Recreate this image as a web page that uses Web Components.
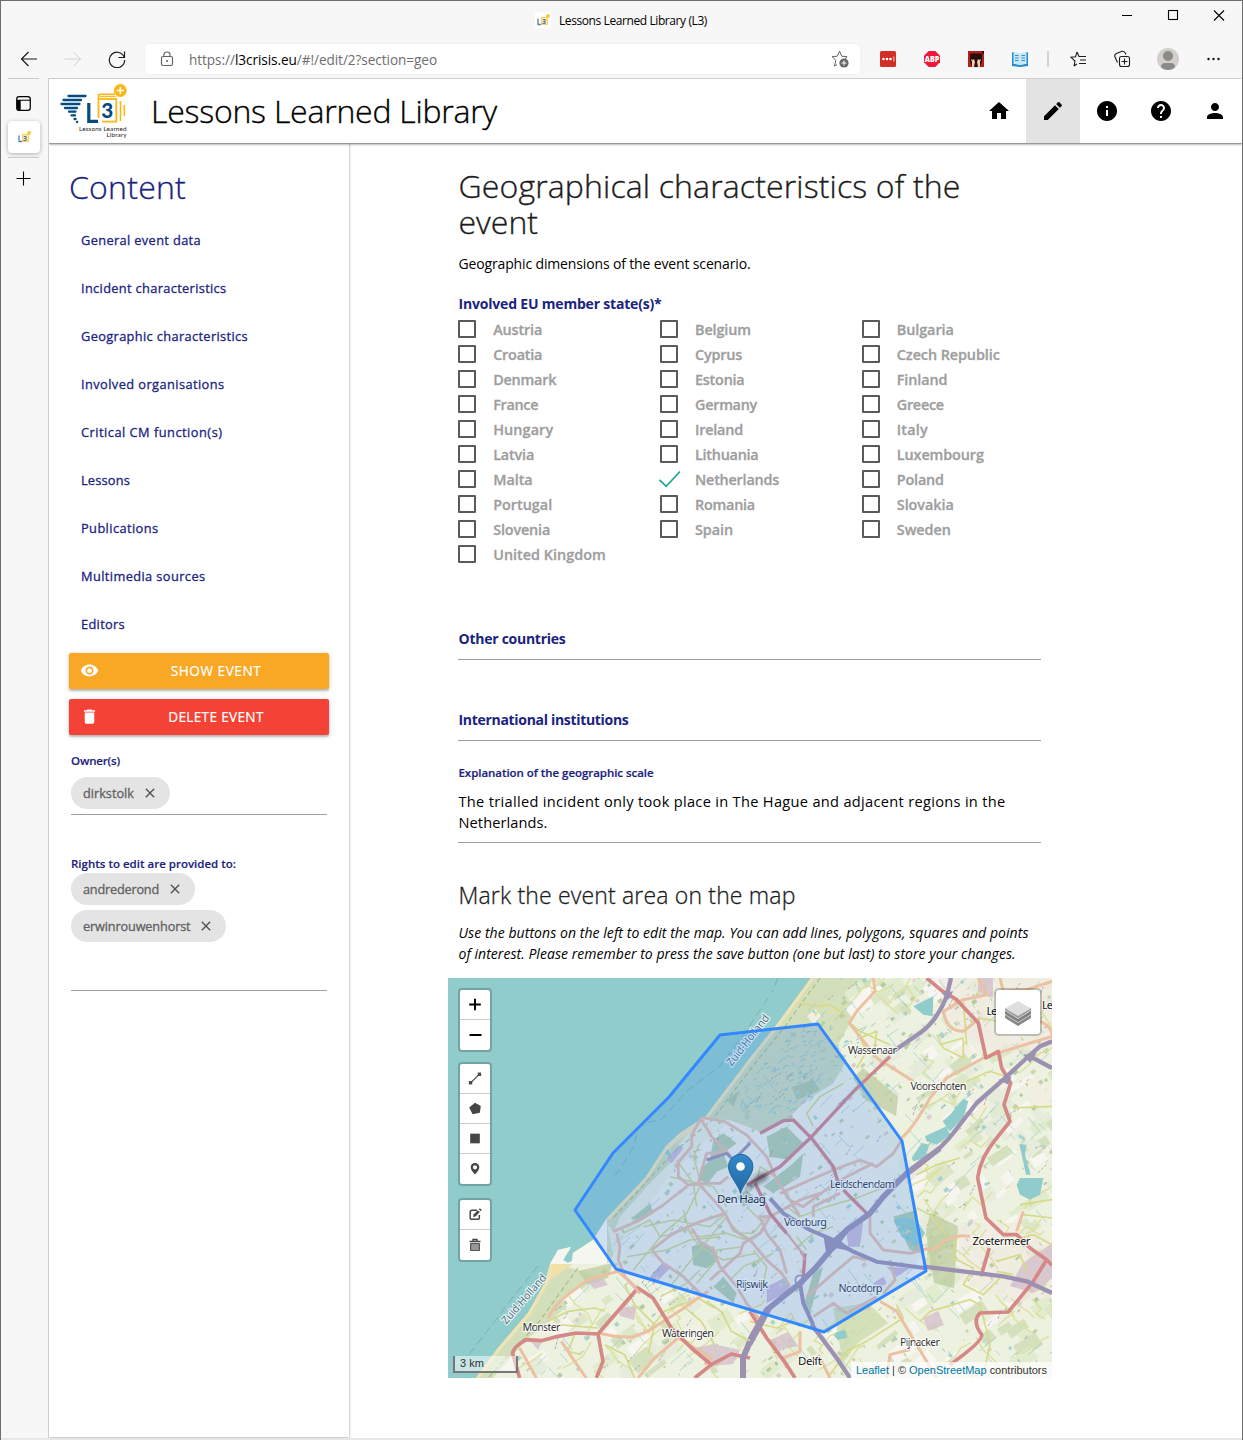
<!DOCTYPE html>
<html lang="en"><head><meta charset="utf-8"><title>Lessons Learned Library (L3)</title>
<style>
html,body{margin:0;padding:0}
body{width:1243px;height:1440px;overflow:hidden;background:#f7f7f7;font-family:"Open Sans","Noto Sans",sans-serif;color:#000}
</style></head><body>
<browser-window></browser-window>
<script>
const define=(name,html,setup)=>customElements.define(name,class extends HTMLElement{
  connectedCallback(){
    if(this.shadowRoot)return;
    const r=this.attachShadow({mode:'open'});
    const t=document.createElement('template');
    t.innerHTML=typeof html==='function'?html(this):html;
    r.append(t.content.cloneNode(true));
    if(setup)setup(this,r);
  }
});
const svg=(s,body,vb=24,extra='')=>`<svg width="${s}" height="${s}" viewBox="0 0 ${vb} ${vb}" ${extra}>${body}</svg>`;
const L=(n,s)=>`fill="none" stroke="${s||'#1b1b1b'}" stroke-width="${n}"`;

/* ---------- brand ---------- */
define('brand-logo',`<style>:host{display:block;width:70px;height:56px}svg{display:block}text{font-family:Lato,"Open Sans",sans-serif}</style>
<svg width="70" height="56" viewBox="0 0 70 56">
<g stroke="#034b80" stroke-width="2.300" stroke-linecap="round">
<path d="M9.500 12H26.500M4.500 16H22M2.500 20H20.500M6 24H18M10 27.700H16.500M12.500 31.300H16M15.500 35H16.500M18 38H18.200"/></g>
<path d="M29.800 19V37.300H39" fill="none" stroke="#034b80" stroke-width="3.200"/>
<g fill="none" stroke="#fcb715" stroke-width="1.800"><path d="M39.500 34V12.500Q39.500 10.300 41.500 10.300H56M57.300 14.500V37.600H43"/><path d="M40 15H57.500" /><path d="M41 12.600H57" stroke-width="1"/><path d="M61.500 17V37M65.300 21V32" stroke-width="1.600"/></g>
<text x="42.300" y="34.300" font-size="21" font-weight="900" fill="#034b80" textLength="12" lengthAdjust="spacingAndGlyphs">3</text>
<circle cx="61.300" cy="6.500" r="6.400" fill="#fcb715"/><path d="M61.300 2.800V10.200M57.600 6.500H65" stroke="#fff" stroke-width="1.500"/>
<text x="20" y="46.500" font-size="6.300" fill="#222" textLength="47.500">Lessons Learned</text>
<text x="47.500" y="53" font-size="6.300" fill="#222" textLength="20">Library</text></svg>`);
define('fav-icon',`<style>:host{display:block;width:16px;height:16px;background:#fff;border-radius:3px}svg{display:block}</style>
<svg width="16" height="16" viewBox="0 0 16 16"><path d="M3 6.500V12.500H6" fill="none" stroke="#4f86ad" stroke-width="1.300"/><rect x="6.500" y="5.500" width="6" height="7" fill="#ffe9a8" stroke="#f9d06a"/><text x="7" y="12" font-size="7" font-weight="700" font-family="Open Sans" fill="#47749c">3</text><circle cx="13" cy="4" r="2.100" fill="#fcc944"/></svg>`);

/* ---------- browser chrome ---------- */
define('title-bar',`<style>:host{display:flex;height:38px;align-items:center;position:relative}
.c{display:flex;gap:8px;padding-left:534px;align-items:center;font-size:12px;flex:1}
</style><div class="c"><fav-icon></fav-icon><fit-text w="148">Lessons Learned Library (L3)</fit-text></div>
<svg width="125" height="30" style="margin-bottom:10px;display:block"><g ${L(1.1,'#000')}><path d="M5 15.500H15M97 10.500L107 20.500M107 10.500L97 20.500"/><rect x="51.500" y="10.500" width="9" height="9"/></g></svg>`);
define('address-bar',`<style>:host{display:flex;align-items:center;box-sizing:border-box;width:715px;height:30px;background:#fff;border-radius:4px;padding:0 11px 0 14px;box-shadow:0 0 3px rgba(0,0,0,.06);color:#6e6e6e}
.u{flex:1;margin-left:14px;font-size:13.600px}b{font-weight:400;color:#000}svg{display:block}</style>
${svg(16,`<g ${L(1.2,'#666')}><rect x="2.500" y="5.500" width="11" height="9" rx="1.500"/><path d="M5 5V3.500Q5 1 8 1T11 3.500V5"/></g><circle cx="8" cy="10" r="1" fill="#555"/>`,16)}
<fit-text class="u" w="248">https://<b>l3crisis.eu</b>/#!/edit/2?section=geo</fit-text>
${svg(18,`<path d="M8.500 1L10.700 6.200L16 6.700L14 9M6 14.500L3.500 16L4.800 10.300L1 6.700L6.300 6.200L8.500 1" ${L(1,'#666')}/><circle cx="13" cy="13" r="4.600" fill="#666"/><path d="M13 10.500V15.500M10.500 13H15.500" stroke="#fff"/>`,18)}`);
define('tool-bar',`<style>:host{display:flex;align-items:center;height:40px;padding:0 18px 0 19px}svg{display:block}
.l{display:flex;gap:26px;margin-right:19px}.r,.x{display:flex;align-items:center}.r{padding-left:20px}.x{gap:28px;margin-right:19px}</style>
<div class="l">${svg(18,`<path d="M17 9H1.500M8.500 2L1.500 9L8.500 16" ${L(1.2)}/>`,18)}${svg(18,`<path d="M.500 9H16.500M9.500 2L16.500 9L9.500 16" ${L(1,'#d0d0d0')}/>`,18)}${svg(18,`<path d="M16.300 7.500A7.700 7.700 0 1 0 16.700 10M16.500 1.500V7.500H10.500" ${L(1.2)}/>`,18)}</div>
<address-bar></address-bar>
<div class="r"><div class="x">
${svg(16,`<rect width="16" height="16" rx="1.500" fill="#d32d27"/><g fill="#fff"><circle cx="3.500" cy="8" r="1.300"/><circle cx="7" cy="8" r="1.300"/><circle cx="10.500" cy="8" r="1.300"/><path d="M13.500 5.500h.8v5h-.8z"/></g>`,16)}
<svg width="16" height="16" viewBox="0 0 16 16"><path d="M4.700 0H11.300L16 4.700V11.300L11.300 16H4.700L0 11.300V4.700Z" fill="#f01838"/><text x=".800" y="11" font-family="Open Sans" font-size="8" font-weight="800" fill="#fff" textLength="14.500" lengthAdjust="spacingAndGlyphs">ABP</text></svg>
${svg(16,`<rect width="16" height="16" fill="#260d0d"/><path d="M0 0H16V3L14 2L12 3L10 2L8 3L6 2L4 3L2 2L0 3ZM0 0H2V10L4 16H0ZM16 0H14V10L12 16H16Z" fill="#b5201d"/><path d="M4 16V11L3 8L5 9L6 8L7 11L6 16ZM12 16V11L13 8L11 9L10 8L9 11L10 16Z" fill="#f2c9ae"/>`,16)}
${svg(16,`<path d="M0 1L3 2V13L8 14L13 13V2L16 1V15L8 16L0 15Z" fill="#2789d3"/><path d="M1.500 1.500Q5 1 8 2.500V14Q5 12.500 1.500 13ZM14.500 1.500Q11 1 8 2.500V14Q11 12.500 14.500 13Z" fill="#c4e9f8"/><path d="M3 4.500H6.500M3 7H6.500M3 9.500H6.500M9.500 4.500H13M9.500 7H13M9.500 9.500H13" stroke="#3e8eb8"/>`,16)}</div>
<svg width="2" height="16"><path d="M1 0V16" stroke="#c9c9c9" stroke-width="1.500"/></svg>
${svg(17,`<path d="M7 1L9 5.500H16M4 15L7 13M4 15L5 10L1 6.300L5.500 5.800L7 1M10 9H16M9 12.500H16" ${L(1.1)}/>`,17,'style="margin-left:21px"')}
${svg(18,`<g ${L(1.1)}><rect x="6.500" y="6.500" width="10" height="10" rx="2"/><path d="M11.500 8.500V14.500M8.500 11.500H14.500M4.500 12.500L2 7Q1 4.500 3.500 3.500L9 1.300Q11.500.700 12.500 3.500L13 4.500"/></g>`,18,'style="margin-left:26px"')}
${svg(22,`<circle cx="11" cy="11" r="11" fill="#d1cfcc"/><circle cx="11" cy="8" r="5" fill="#8d8986"/><path d="M4 19.500Q4 15 8 15H14Q18 15 18 19.500Q11 24.500 4 19.500" fill="#8d8986"/>`,22,'style="margin-left:26px"')}
<svg style="margin-left:25px" width="18" height="18"><g fill="#111"><circle cx="4.500" cy="9" r="1.200"/><circle cx="9.500" cy="9" r="1.200"/><circle cx="14.500" cy="9" r="1.200"/></g></svg></div>`);
define('tab-rail',`<style>:host{display:flex;flex-direction:column;align-items:center;width:48px;box-sizing:border-box;border-right:1px solid #cfcfcf;padding-right:2px;margin-top:-1px}
svg{display:block}hr{width:31px;height:1px;border:0;background:#c9c9c9;margin:0}.t{width:32px;height:32px;background:#fff;border-radius:4px;box-shadow:0 1px 4px rgba(0,0,0,.3);display:grid;place-items:center;margin:10px 0 4px}.a{margin-top:17px}.b{margin-top:13px}</style>
<hr><div class="a">${svg(15,`<rect x=".700" y=".700" width="13" height="13" rx="2.200" ${L(1.2,'#000')}/><path d="M1 4H4.500V14H2.500Q1 14 1 12.500ZM1 3.500H14V4.500H1Z"/>`,14.4)}</div><div class="t"><fav-icon></fav-icon></div><hr><div class="b">${svg(15,`<path d="M7.500.500V14.500M.500 7.500H14.500" ${L(1.1,'#000')}/>`,15)}</div>`);

/* ---------- application header ---------- */
const icons={
home:'<path d="M10 20v-6h4v6h5v-8h3L12 3 2 12h3v8z"/>',
edit:'<path d="M3 17.250V21h3.750L17.810 9.940l-3.750-3.750L3 17.250zM20.710 7.040c.390-.390.390-1.020 0-1.410l-2.340-2.340a1 1 0 0 0-1.410 0l-1.830 1.830 3.750 3.750 1.830-1.830z"/>',
info:'<path d="M12 2C6.480 2 2 6.480 2 12s4.480 10 10 10 10-4.480 10-10S17.520 2 12 2zm1 15h-2v-6h2v6zm0-8h-2V7h2v2z"/>',
help:'<path d="M12 2C6.480 2 2 6.480 2 12s4.480 10 10 10 10-4.480 10-10S17.520 2 12 2zm1 17h-2v-2h2v2zm2.070-7.750l-.900.920C13.450 12.900 13 13.500 13 15h-2v-.500c0-1.100.450-2.100 1.170-2.830l1.240-1.260c.370-.360.590-.860.590-1.410 0-1.100-.900-2-2-2s-2 .900-2 2H8c0-2.210 1.790-4 4-4s4 1.790 4 4c0 .880-.360 1.680-.930 2.250z"/>',
person:'<path d="M12 12c2.210 0 4-1.790 4-4s-1.790-4-4-4-4 1.790-4 4 1.790 4 4 4zm0 2c-2.670 0-8 1.340-8 4v2h16v-2c0-2.660-5.330-4-8-4z"/>',
eye:'<path d="M12 4.500C7 4.500 2.730 7.610 1 12c1.730 4.390 6 7.500 11 7.500s9.270-3.110 11-7.500c-1.730-4.390-6-7.500-11-7.500zM12 17c-2.760 0-5-2.240-5-5s2.240-5 5-5 5 2.240 5 5-2.240 5-5 5zm0-8c-1.660 0-3 1.340-3 3s1.340 3 3 3 3-1.340 3-3-1.340-3-3-3z"/>',
bin:'<path d="M6 19c0 1.100.900 2 2 2h8c1.100 0 2-.900 2-2V7H6v12zM19 4h-3.500l-1-1h-5l-1 1H5v2h14V4z"/>',
close:'<path d="M19 6.410L17.590 5 12 10.590 6.410 5 5 6.410 10.590 12 5 17.590 6.410 19 12 13.410 17.590 19 19 17.590 13.410 12z"/>'};
define('nav-icon',h=>`<style>:host{display:grid;place-items:center;width:54px;height:64px}:host([active]){background:#e3e3e3}</style>${svg(24,icons[h.getAttribute('name')])}`);
define('app-header',`<style>:host{display:flex;height:64px;background:#fff;box-shadow:0 2px 2px rgba(0,0,0,.22),0 1px 1px rgba(0,0,0,.25);position:relative;z-index:2}
.g{padding:5px 0 0 10px}.t{font-size:32px;font-weight:300;line-height:64px;margin-left:22px;flex:1;-webkit-text-stroke:.350px}</style>
<brand-logo class="g"></brand-logo><fit-text class="t" w="346">Lessons Learned Library</fit-text>
<nav-icon name="home"></nav-icon><nav-icon name="edit" active></nav-icon><nav-icon name="info"></nav-icon><nav-icon name="help"></nav-icon><nav-icon name="person"></nav-icon>`);

/* ---------- side panel ---------- */
define('action-button',h=>`<style>:host{display:flex;align-items:center;height:36px;border-radius:2px;color:#fff;box-shadow:0 2px 2px rgba(0,0,0,.18),0 1px 4px rgba(0,0,0,.2);font-size:13.600px;margin-bottom:10px;-webkit-text-stroke:.200px}
svg{fill:#fff;margin-left:11px;display:block}.t{flex:1;text-align:center;padding-left:4px}</style>${svg(19,icons[h.getAttribute('icon')])}<fit-text class="t" w="${h.getAttribute('w')}">${h.getAttribute('label')}</fit-text>`);
define('name-chip',h=>`<style>:host{display:flex;width:max-content;align-items:center;height:32px;border-radius:16px;background:#e4e4e4;color:#616161;font-size:12.700px;padding:0 12px;margin-bottom:5px;box-sizing:border-box;-webkit-text-stroke:.300px}
svg{fill:#505050;margin-left:8px;display:block}</style><fit-text w="${h.getAttribute('w')}">${h.getAttribute('name')}</fit-text>${svg(16,icons.close)}`);
define('side-panel',`<style>:host{display:block;box-sizing:border-box;width:300px;background:#fff;padding:25px 20px 0;box-shadow:0 0 2px rgba(0,0,0,.35),0 1px 3px rgba(0,0,0,.15);color:#1a237e}
h2{margin:0;font-size:32px;line-height:38px;font-weight:300;-webkit-text-stroke:.350px}ul{list-style:none;margin:10px 0 4.500px;padding:0 12px}li{height:48px;line-height:48px;font-size:12.800px;-webkit-text-stroke:.300px}
.l{font-size:11.500px;line-height:20px;font-weight:600;-webkit-text-stroke:.150px}.f{margin:0 2px;border-bottom:1px solid #9e9e9e}</style>
<h2><fit-text w="117">Content</fit-text></h2>
<ul>${[['General event data',120],['Incident characteristics',145.5],['Geographic characteristics',167],['Involved organisations',143.5],['Critical CM function(s)',141.5],['Lessons',49],['Publications',77.5],['Multimedia sources',124.5],['Editors',44]].map(a=>`<li><fit-text w="${a[1]}">${a[0]}</fit-text></li>`).join('')}</ul>
<action-button style="background:#f9a825" icon="eye" label="SHOW EVENT" w="90.500"></action-button>
<action-button style="background:#f44336" icon="bin" label="DELETE EVENT" w="95.500"></action-button>
<div class="f" style="padding-top:6px;height:63px"><div class="l" style="margin-bottom:6px"><fit-text w="49">Owner(s)</fit-text></div><name-chip name="dirkstolk" w="51"></name-chip></div>
<div class="f" style="padding-top:39px;height:136px"><div class="l" style="height:19px"><fit-text w="165">Rights to edit are provided to:</fit-text></div><name-chip name="andrederond" w="76"></name-chip><name-chip name="erwinrouwenhorst" w="107.500"></name-chip></div>`);

/* ---------- form ---------- */
define('state-option',h=>`<style>:host{display:flex;align-items:center;height:25px;font-size:14.400px;font-weight:600;color:#9e9e9e;-webkit-text-stroke:.300px}i{box-sizing:border-box;width:18px;height:18px;border:2px solid #5a5a5a;border-radius:1px;margin-right:17.200px}svg{display:block;margin:0 14.500px 0 -1.300px}</style>${h.hasAttribute('checked')?`<svg width="22" height="20"><path d="M.500 11L7.200 17.300L21 2.500" ${L(1.8,'#26a69a')}/></svg>`:'<i></i>'}<fit-text w="${h.getAttribute('w')}">${h.getAttribute('name')}</fit-text>`);
const states='Austria 49,Belgium 56,Bulgaria 57,Croatia 49,Cyprus 47,Czech Republic 103,Denmark 63,Estonia 49.5,Finland 50.5,France 45,Germany 62,Greece 47,Hungary 60,Ireland 48,Italy 31,Latvia 41,Lithuania 63.500,Luxembourg 87,Malta 39.500,Netherlands 84,Poland 47,Portugal 59,Romania 60,Slovakia 57,Slovenia 57,Spain 38,Sweden 54,United Kingdom 112.500'.split(',').map(s=>{const i=s.lastIndexOf(' ');return[s.slice(0,i),s.slice(i+1)]});
define('event-form',`<style>:host{display:block;width:583px;padding:24.500px 0 0 109px}
h1{margin:0;font-size:32px;line-height:36px;font-weight:300;height:72px;color:#1c1c1c;-webkit-text-stroke:.350px}.d{font-size:14px;line-height:22px;margin-top:13px}
.l{font-size:14px;line-height:22px;font-weight:700;color:#1a237e}.g{display:grid;grid-template-columns:201.800px 201.800px 179px;margin-top:2px}
.f{border-bottom:1px solid #9e9e9e}.s{font-size:11.500px;line-height:20px;font-weight:600;-webkit-text-stroke:.200px}.p{font-size:14.600px;line-height:21px}h3{margin:36px 0 0;font-size:23px;line-height:32px;font-weight:300;color:#1c1c1c;-webkit-text-stroke:.300px}
.i{font-style:italic;font-size:14px;line-height:21px;margin:11px 0 14px}h1,h3,.d,.l,.p,.i{padding-left:.500px}map-view{margin-left:-10px}</style>
<h1><fit-text w="502">Geographical characteristics of the</fit-text><br><fit-text w="79.500">event</fit-text></h1>
<div class="d"><fit-text w="292">Geographic dimensions of the event scenario.</fit-text></div>
<div class="l" style="margin-top:18px"><fit-text w="203">Involved EU member state(s)*</fit-text></div>
<div class="g">${states.map(s=>`<state-option name="${s[0]}" w="${s[1]}" ${s[0]=='Netherlands'?'checked':''}></state-option>`).join('')}</div>
<div class="f" style="padding-top:61px;height:31px"><div class="l"><fit-text w="107">Other countries</fit-text></div></div>
<div class="f" style="padding-top:49px;height:31px"><div class="l"><fit-text w="170">International institutions</fit-text></div></div>
<div class="f" style="padding-top:22px;height:79px"><div class="l s"><fit-text w="195">Explanation of the geographic scale</fit-text></div><div class="p" style="margin-top:8px"><fit-text w="547">The trialled incident only took place in The Hague and adjacent regions in the</fit-text><br><fit-text w="89">Netherlands.</fit-text></div></div>
<h3><fit-text w="337">Mark the event area on the map</fit-text></h3>
<div class="i"><fit-text w="570">Use the buttons on the left to edit the map. You can add lines, polygons, squares and points</fit-text><br><fit-text w="557">of interest. Please remember to press the save button (one but last) to store your changes.</fit-text></div>
<map-view></map-view>`);

/* ---------- map ---------- */
function mapTexture(){
  let s=7;const R=()=>(s=(s*16807)%2147483647)/2147483647;
  let fields='',yellow='',water='',blocks='',hedge='';
  const coast=y=>y<80?363-y*.76:y<200?302-(y-80)*.88:197-(y-200)*.87;
  const city=(x,y)=>x+y*.1<480&&x>160&&y>40&&y<350&&y<245+x*.3;
  for(let i=0;i<420;i++){const y=R()*400,x=coast(y)+25+R()*(604-coast(y));const w=5+R()*24,h=4+R()*13,k=R()*7|0,c=['#e1ebcd','#f7f6f0','#dde7c8','#f0efe0','#e6ecdb','#f7f5ef','#d5e0bf'][k];
    if(city(x,y)&&k!=4)continue;
    fields+=`<rect x="${x|0}" y="${y|0}" width="${w|0}" height="${h|0}" fill="${c}" transform="rotate(${-42+R()*12|0} ${x|0} ${y|0})"/>`}
  for(let i=0;i<700;i++){const y=R()*400,x=coast(y)+22+R()*(604-coast(y));const c=['#b3cba0','#c2d1ac','#dccdd0','#a9d3cd','#cfd9ae','#bccda8'][R()*6|0];
    blocks+=`<rect x="${x|0}" y="${y|0}" width="${1+R()*5|0}" height="${1+R()*4|0}" fill="${c}" transform="rotate(-40 ${x|0} ${y|0})"/>`}
  for(let i=0;i<200;i++){const y=R()*400,x=coast(y)+22+R()*(604-coast(y)),l=5+R()*20,a=(R()<.6?-.85:.75)+R()*.2;
    water+=`M${x|0} ${y|0}l${(Math.cos(a)*l).toFixed(1)} ${(Math.sin(a)*l).toFixed(1)}`}
  for(let i=0;i<170;i++){let y=R()*400,x=coast(y)+28+R()*(590-coast(y));if(city(x,y)||y<230&&x>480&&R()<.75)continue;yellow+=`M${x|0} ${y|0}`;const b=R()<.55?-.7:.85;for(let k=0;k<3;k++){const l=5+R()*12,a=b+(R()-.5)*.7+(k==1&&R()<.4?1.4:0);yellow+=`l${(Math.cos(a)*l).toFixed(1)} ${(Math.sin(a)*l).toFixed(1)}`}}
  for(let i=0;i<80;i++){const y=R()*400,x=coast(y)+25+R()*(604-coast(y));hedge+=`M${x|0} ${y|0}l${3+R()*8|0} ${-3-R()*9|0}`}
  let dunes='';
  for(let i=0;i<150;i++){const y=50+R()*85,x=coast(y)+18+R()*80;dunes+=`M${x.toFixed(1)} ${y.toFixed(1)}q2 ${-3*R()|0} ${2+R()*3|0} ${-1-R()*3|0}`}
  return{base:`${fields}`,over:`${blocks}<path d="${dunes}" fill="none" stroke="#90c5c4" stroke-width="1"/><path d="${water}" fill="none" stroke="#8cc9ca" stroke-width=".600"/><path d="${yellow}" fill="none" stroke="#dce19d" stroke-width="1.400" stroke-linejoin="round"/><path d="${hedge}" stroke="#8f809c" stroke-width=".600" stroke-dasharray="3 1.500"/>`};
}
const tex=mapTexture();
const place=(x,y,w,t,c='#333',fs=10.9)=>`<text x="${x-.5}" y="${y}" text-anchor="middle" textLength="${w}" font-size="${fs}" fill="${c}">${t}</text>`;
define('tool-stack',`<style>:host{display:flex;flex-direction:column;width:30px;background:#fff;border:2px solid rgba(0,0,0,.2);border-radius:4px;background-clip:padding-box}::slotted(svg){display:block;width:30px;height:30px;border-bottom:1px solid #ccc;box-sizing:border-box}::slotted(svg:last-child){border-bottom:0}</style><slot></slot>`);
define('map-view',`<style>:host{display:block;width:604px;height:400px;position:relative;overflow:hidden;background:#90cccb}
.m{display:block}.m text{font-family:"Noto Sans","Open Sans",sans-serif;paint-order:stroke;stroke:rgba(255,255,255,.75);stroke-width:2.400px;stroke-linejoin:round}
.tools{position:absolute;left:10px;top:10px;display:flex;flex-direction:column;gap:10px}
.layers{position:absolute;right:10px;top:10px;width:44px;height:44px;border:2px solid rgba(0,0,0,.2);background:#fff;background-clip:padding-box;border-radius:5px}
.scale{position:absolute;left:5px;bottom:5px;width:56px;height:15px;border:2px solid #777;border-top:0;background:rgba(255,255,255,.5);font:11px/15px "Liberation Sans",sans-serif;padding-left:5px;color:#333}
.attr{position:absolute;right:0;bottom:0;height:16px;line-height:16px;padding:0 5px 0 5px;background:rgba(255,255,255,.7);font-family:"Liberation Sans",sans-serif;font-size:11px;color:#333}.attr b{font-weight:400;color:#0078a8}</style>
<svg class="m" width="604" height="400" viewBox="0 0 604 400">
<defs><clipPath id="land"><path d="M363 0L330 45L302 80L258 138L232 155L218 168L197 200L159 240L145 262L125 275L124 283L120 285L115 282L123 269L110 272L102 286L97 305L80 335L50 370L28 400H604V0Z"/></clipPath><linearGradient id="pin" x2="0" y2="1"><stop stop-color="#3389c8"/><stop offset="1" stop-color="#2268a5"/></linearGradient><filter id="blur"><feGaussianBlur stdDeviation="2"/></filter></defs>
<rect width="604" height="400" fill="#90cccb"/>
<g clip-path="url(#land)"><rect width="604" height="400" fill="#edf1df"/>
<path d="M302 80L363 0H425L402 45L380 85L330 110L260 160L220 200L159 286H110L155 300L80 360L45 400H0V300L159 240Z" fill="#d3dfba"/>
${tex.base}
<path d="M255 138L300 140L350 128L375 100L400 105L445 175L470 290L376 350L168 290L160 250L215 185Z" fill="#ededE6" opacity=".8"/>
<path d="M510 245H570L604 265V320L560 325L512 300ZM490 0H604V70L550 75L500 50Z" fill="#f0e9df" opacity=".7"/>
<g transform="translate(152 42) scale(.33333)"><path d="M20 600L300 285L520 30L650 10L740 120L700 190L620 240L560 300L480 335L390 300L310 295L230 370L210 430L140 500L60 590L40 640Z" fill="#ccdab9"/>
<path d="M340 360L370 340L410 370L370 400L385 440L350 455L325 490L295 480L310 440L330 420ZM275 680L310 665L345 690L355 720L320 745L280 735ZM490 500L580 430L610 400L600 470L520 520ZM500 350L560 320L610 370L570 420L510 410ZM340 800L370 770L410 820L400 850ZM880 590L950 570L970 700L930 690ZM640 760L670 740L630 880L610 860ZM575 200L640 180L660 210L590 240ZM380 240L420 210L400 260ZM100 590L150 550L160 580L110 610ZM410 530L440 510L470 540L430 560Z" fill="#a9c6a0" opacity=".85"/>
<path d="M150 770L190 725L215 740L160 795ZM740 640L790 600L780 680L745 680ZM500 800L560 770L570 810L500 850ZM860 740L930 745L890 770ZM200 420L235 375L250 385L215 430ZM820 790L850 770L860 790L830 810Z" fill="#c9b9d2"/>
<path d="M880 600L910 590L950 600L975 640L950 680L905 650ZM700 945L735 930L745 950L715 960ZM170 365L190 400L215 410L200 380Z" fill="#90cccb"/></g>
${tex.over}
<path d="M415 90L450 118L448 138L418 122L405 100ZM482 235L510 248L506 310L486 305L478 255ZM130 293L165 285L160 300L140 307Z" fill="#b9ca9c" opacity=".7"/>
<path d="M385 330L420 325L440 345L410 365L395 385Z" fill="#c9d9a6" opacity=".7"/>
<path d="M243 371L265 366L292 372L285 386L262 388ZM475 340L490 333L496 347L480 353ZM575 285L604 265V300L585 315L562 308ZM170 330L188 328L186 342L172 338ZM140 303L155 300L160 307L146 311ZM80 360L95 362L90 372ZM530 0H545V20L530 14ZM322 362L340 354L350 368L330 372Z" fill="#d3c0cb" opacity=".8"/>
<path d="M97 305L125 286H102L90 325L30 400H20L95 300Z" fill="#f1e1a8"/>
<path d="M159 219V286H100V219Z" fill="#f6f6f1"/>
<path d="M363 0L330 45L302 80L258 138L218 168L197 200L159 240M102 286L97 305L80 335L50 370L28 400" fill="none" stroke="#f0e3b3" stroke-width="6"/><path d="M372 0L338 47L308 84L264 142L225 175L165 240M130 290L90 345L40 400" fill="none" stroke="#aabd86" stroke-width="1.200" stroke-dasharray="5 3"/>
</g>
<g transform="translate(302 0) scale(.33333)"><g fill="#90cccb"><path d="M600 410L640 362L655 370L640 420L600 460L578 430ZM525 475L590 445L600 470L560 500L530 490ZM485 540L515 495L538 500L525 540L490 550ZM490 85L550 55L548 115L520 110ZM808 498L830 500L825 530L842 590H828Z"/></g>
<g fill="none" stroke-linejoin="round"><path d="M145 75L200 85L240 80L290 115M300 135L330 160L420 200M320 270L350 220L330 180L380 160L370 240M560 170L580 210L640 240L640 180L570 200M640 70L650 200M906 385L790 390M500 590L560 560L630 540M690 120L800 140L840 110M650 310L720 280L780 300" stroke="#d7da87" stroke-width="5"/>
<path d="M370 0L375 40L320 100L298 135L380 240L490 310M906 175L760 220L700 240L590 300L540 360Q490 450 455 480M685 0L710 50L640 65L580 100Q590 160 640 160L690 120M906 10L830 35L760 40L750 0M870 130Q900 140 906 170" stroke="#ebc1a1" stroke-width="9"/>
<path d="M530 0L575 38L620 65L685 135L708 240L745 220L755 270L782 315L762 380L780 430L740 480Q690 540 683 600" stroke="#d58885" stroke-width="11"/>
<path d="M603 0L590 55Q560 130 510 165L430 220M906 190L870 205L830 240L760 305L680 375L610 465Q560 530 440 610M840 235L906 270" stroke="#9d91b2" stroke-width="13"/><path d="M745 305L785 295L775 320ZM820 230L860 225L840 255ZM575 45L610 40L595 65Z" fill="#9d91b2"/></g></g>
<g transform="translate(302 200) scale(.33333)"><path d="M800 20L810 0H880L870 50L840 65L810 50ZM255 465L285 455L290 480L262 485Z" fill="#90cccb"/>
<g fill="none" stroke-linejoin="round"><path d="M620 180L610 240L670 270L640 320L700 350L750 300M810 80L906 65M820 110L906 120M740 250L810 230L830 280M740 280L790 290M780 190L850 170L906 200M500 90L540 110L590 170M510 430L540 400L660 365L690 380L720 500L700 590M240 590L290 520L350 490L460 420L440 380M0 430L80 450L130 430" stroke="#d7da87" stroke-width="5"/>
<path d="M530 215L560 210Q600 165 660 175M390 370L440 400L470 450L500 500L560 600M410 600L420 530L480 515M150 460L150 520L100 540L110 570M205 530L240 600M820 100L800 160" stroke="#ebc1a1" stroke-width="9"/>
<path d="M683 0L708 120L760 170H800L840 210L890 245L906 262M890 245L850 310L775 402L690 405Q665 430 695 470Q700 490 600 560M718 210L693 295M0 400L50 480L110 560L135 600" stroke="#d58885" stroke-width="11"/>
<path d="M525 267L540 268L760 295L830 310L906 345M185 440L260 540L300 600M60 390L0 500" stroke="#9d91b2" stroke-width="13"/></g></g>
<g transform="translate(0 200) scale(.33333)"><g fill="none" stroke-linejoin="round"><path d="M300 430L360 400L440 390L470 400M330 440L450 450M470 500L530 530L560 600M380 470L360 520L400 530M600 460L650 400L750 360L800 390M820 400L850 460L906 490M700 380L760 430L800 500M530 320L560 380L620 440L600 530" stroke="#d4d98b" stroke-width="5"/>
<path d="M300 420Q320 380 360 350L420 305L510 280L545 310L570 335M450 465L500 475L550 478L600 460L700 395L780 340M340 490L380 550L415 600M215 510L265 600M570 600L620 540L690 480L790 540L770 560" stroke="#ebc1a1" stroke-width="9"/>
<path d="M215 600L195 530Q190 510 235 485L280 488L330 475L385 465L450 468L570 330L615 360L670 450L730 510L790 560L850 528L906 540M450 468L465 550L445 600M790 560L740 600" stroke="#d58885" stroke-width="11"/><path d="M906 490L885 540V600" stroke="#9d91b2" stroke-width="18"/></g></g>
<g transform="translate(152 42) scale(.33333)" fill="none" stroke-linejoin="round">
<path d="M230 420L280 490L290 560M210 470L340 500L380 560M300 370L280 410L300 480M70 640L150 600L180 650L230 640M80 710L200 690L270 660L360 650M100 750L190 640L260 580L300 500M130 620L220 600L330 620L380 580M210 800L290 700L340 640L380 590M250 570L270 640L300 680L370 720L470 700M290 790L350 720L350 690L430 680M240 620L300 650L380 640L440 660M390 780L430 740L520 700M380 600L420 640L460 640L500 590M440 560L480 600M530 470L480 440L470 490M580 690L640 640L700 620M560 560L600 590L680 560L780 530L860 500M640 320L620 280L660 230L730 190M590 650L620 690M460 690L500 740L490 790M330 850L370 880M180 830L260 790L300 750" stroke="#ccd68c" stroke-width="4.500"/>
<path d="M305 292L375 305L440 345L500 410L530 480L570 540L610 560L690 500M305 292L275 345V380L235 425V470L265 495L300 490L360 490L385 470M275 380L225 440M305 300L335 350L380 395L400 420M380 395L320 400L305 450L295 490L345 545L375 580L400 630L450 660L500 720L545 760L570 800M40 635L120 600L190 555L265 495M50 640L60 680L55 720L75 770L120 820M155 690L220 640L300 605L375 580M155 690L190 730L250 770L310 830M275 625L300 665L340 690L360 740L410 800L440 850L480 900M330 780L420 700L430 670L480 640L510 590L600 540L660 520M510 590L480 590L500 640L540 690L560 760M570 540L600 590M540 520L630 480L700 450L780 420L830 440L880 400L905 360M690 500L740 470L820 430M640 590V560L720 520M640 890L700 850L740 880L830 830M620 830L700 760L760 710L800 720M810 590V640L850 690L930 700L985 685M870 720L885 780L850 820" stroke="#e3bdac" stroke-width="8.500"/>
<path d="M440 495L540 440L630 355L760 215L870 110M480 340L550 302L580 300L635 355L700 440L715 490M465 490L510 580L560 640M730 510L810 590M615 700L610 770L600 800" stroke="#cf858b" stroke-width="10"/>
<path d="M560 640L600 690L615 720" stroke="#dfa39e" stroke-width="6"/>
<path d="M320 420L380 400L400 420L450 370" stroke="#9d91b2" stroke-width="9"/><path d="M510 535L550 580L630 630L700 660L760 695L830 725L980 745M600 790L610 850L640 915" stroke="#9d91b2" stroke-width="12"/>
<path d="M1020 385L920 460L850 530L810 580L740 630L700 680L650 740L600 790L500 870L450 960" stroke="#9d91b2" stroke-width="17"/><path d="M670 645L700 655L735 625L725 665L760 695L710 685L680 710Z" fill="#9d91b2"/><circle cx="600" cy="780" r="14" stroke="#9d91b2" stroke-width="5"/>
</g>
<path d="M320 20L295 58L270 90L240 112L213 142L200 144L190 150L186 168L166 200M90 288L66 318L20 378L0 400M330 0L324 14" fill="none" stroke="#799fae" stroke-width=".700" stroke-dasharray="8 5"/>
${place(425,76,49,'Wassenaar')}${place(491,112,56,'Voorschoten')}${place(415,210,65,'Leidschendam')}${place(358,248,43,'Voorburg')}${place(294,225,49,'Den Haag','#111',11.6)}${place(304.500,310,32,'Rijswijk')}${place(413,314,44,'Nootdorp')}${place(554,267,58,'Zoetermeer','#111',11.6)}${place(472.500,368,40,'Pijnacker')}${place(362.500,387,24,'Delft','#111',11.6)}${place(94,352.500,38,'Monster')}${place(240.500,359,52,'Wateringen')}${place(544.500,37,11,'Le','#111',11.600)}${place(600,31,11,'Le','#222',11)}
<g transform="translate(303 64) rotate(-52)">${place(0,0,62,'Zuid-Holland','#55768a',10.8)}</g><g transform="translate(79 323) rotate(-49)">${place(0,0,62,'Zuid-Holland','#55768a',10.8)}</g>
<path d="M272 57L370 46L454 163L478 293L376 354L168 291L127 232L165 175L221 119Z" fill="#38f" fill-opacity=".2" stroke="#38f" stroke-width="3" stroke-linejoin="round"/>
<path d="M294 214L308 198Q314 192 320 196Q322 201 312 205Z" fill="#000" opacity=".4" filter="url(#blur)"/>
<path d="M292.500 215.500C291 207 280.500 198 280.500 188.500A12.200 12.200 0 0 1 304.900 188.500C304.900 198 294 207 292.500 215.500Z" fill="url(#pin)" stroke="#23679d"/><circle cx="292.500" cy="188.500" r="4.300" fill="#fff"/>
</svg>
<div class="tools"><tool-stack><svg viewBox="0 0 30 30"><path d="M9 15H21M15 9V21" stroke="#000" stroke-width="2"/></svg><svg viewBox="0 0 30 30"><path d="M9.500 15H21.500" stroke="#000" stroke-width="2"/></svg></tool-stack>
<tool-stack><svg viewBox="0 0 30 30"><g ${L(1.3,'#464646')}><path d="M11 19L19 11"/><rect x="9.300" y="18.300" width="2.200" height="2.200"/><rect x="18.500" y="9.500" width="2.200" height="2.200"/></g></svg>
<svg viewBox="0 0 30 30"><path d="M15 9L21 12.500L20 19.500L12.500 21L9 14Z" fill="#464646"/></svg><svg viewBox="0 0 30 30"><path d="M10 10H20V20H10Z" fill="#464646"/></svg>
<svg viewBox="0 0 30 30"><path fill-rule="evenodd" d="M15 9C12.500 9 10.700 10.800 10.700 13C10.700 16.500 15 20.500 15 20.500S19.300 16.500 19.300 13C19.300 10.800 17.500 9 15 9ZM15 11.200A2.100 2.100 0 1 1 15 15.400A2.100 2.100 0 1 1 15 11.200" fill="#464646"/></svg></tool-stack>
<tool-stack style="margin-top:2px"><svg viewBox="0 0 30 30"><path d="M17 10.500H12Q10 10.500 10 12.500V18Q10 20 12 20H17.500Q19.500 20 19.500 18V15.500" ${L(1.5,'#464646')}/><path d="M13 17.500L13.500 15L18 10.500L20 12.500L15.500 17Z" fill="#464646"/><path d="M19.500 9L21.500 11" stroke="#464646" stroke-width="1.500"/></svg>
<svg viewBox="0 0 30 30"><path d="M9.500 11.500H20.500M13 11V9.500H17V11" ${L(1.4,'#464646')}/><path d="M10.500 13.500V20.500H19.500V13.500Z" fill="#888" stroke="#555"/><path d="M13 14V20M15 14V20M17 14V20" stroke="#b4b4b4" stroke-width=".700"/></svg></tool-stack></div>
<div class="layers"><svg width="44" height="44" viewBox="0 0 44 44"><path d="M9 28L22 36L35 28V25H9Z" fill="#888"/><path d="M9 25L22 33L35 25L22 18Z" fill="#c5c5c5"/><path d="M9 21V24L22 32L35 24V21Z" fill="#808080"/><path d="M9 21L22 29L35 21L22 13Z" fill="#d0d0d0"/><path d="M9 18V20L22 28L35 20V18Z" fill="#999"/><path d="M9 18.500L22 11L35 18.500L22 26Z" fill="#dedede"/></svg></div>
<div class="scale">3 km</div><div class="attr"><fit-text w="191"><b>Leaflet</b> | © <b>OpenStreetMap</b> contributors</fit-text></div>`);

/* ---------- shell ---------- */
define('browser-window',`<style>:host{display:flex;flex-direction:column;box-sizing:border-box;width:1243px;height:1440px;border:1px solid #6f6d6f;border-bottom:0;background:#f7f7f7}
.b{display:flex;flex:1;min-height:0}.app{flex:1;display:flex;flex-direction:column;background:#fff;border-top:1px solid #cfcfcf;overflow:hidden;margin-top:-1px}.c{display:flex;flex:1;align-items:stretch;min-height:0}.foot{height:2px;background:#e7e7e7}side-panel{margin-bottom:1px}</style>
<title-bar></title-bar><tool-bar></tool-bar><div class="b"><tab-rail></tab-rail><div class="app"><app-header></app-header><div class="c"><side-panel></side-panel><event-form></event-form></div></div></div><div class="foot"></div>`);

/* Text run tracked to a given width in pixels; defined last so that its surroundings are styled. */
define('fit-text','<style>:host{display:inline-block;white-space:pre}span{display:inline-block;text-align:left}</style><span><slot></slot></span>',(h,r)=>{
  const s=r.querySelector('span'),w=+h.getAttribute('w'),n=h.textContent.length;
  const d=(w-s.getBoundingClientRect().width)/n;
  s.style.letterSpacing=d.toFixed(3)+'px';
});
</script>
</body></html>
